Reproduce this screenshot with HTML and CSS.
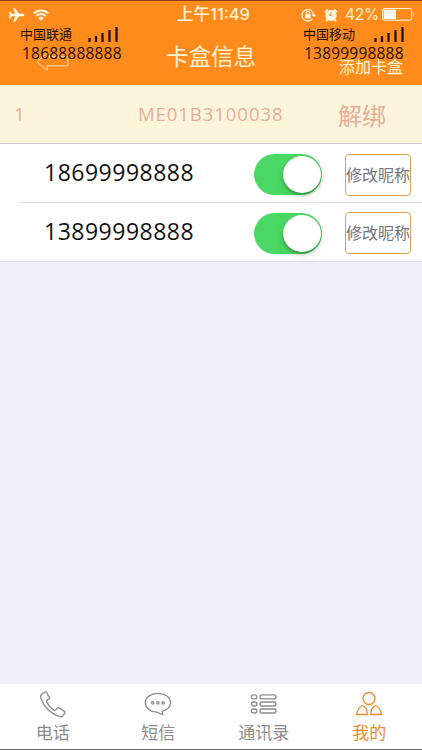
FILE: index.html
```html
<!DOCTYPE html>
<html lang="zh-CN">
<head>
  <meta charset="UTF-8">
  <meta name="viewport" content="width=device-width, initial-scale=1.0">
  <title>卡盒信息</title>
  <link rel="stylesheet" href="styles.css">
</head>
<body>

  <header>
    <div class="status-bar">
      <div class="status-left">
        <svg width="17" height="14" viewBox="0 0 17 14"><path d="M16.300 7c0 .8-.8 1.300-1.600 1.300h-3.600L7 13.800H5L7.200 8.300H4L2.200 10.200H.6L1.700 7 .6 3.800h1.600L4 5.700h3.200L5 .2h2l4.100 5.500h3.600c.8 0 1.600.5 1.600 1.300z" fill="#fff8e6"/></svg>
        <svg class="wifi" width="16" height="12" viewBox="0 0 16 12"><g fill="none" stroke="#fff8e6" stroke-width="2"><path d="M.8 4.400a10.200 10.200 0 0 1 14.400 0"/><path d="M3.300 7a6.600 6.600 0 0 1 9.400 0"/></g><path d="M8 11.800L5.200 9a4 4 0 0 1 5.600 0z" fill="#fff8e6"/></svg>
      </div>
      <div class="status-time">上午11:49</div>
      <div class="status-right">
        <svg width="16" height="14" viewBox="0 0 16 14"><path d="M11.400 10.900A5.800 5.800 0 1 1 12.600 7" fill="none" stroke="#fff8e6" stroke-width="1.2"/><path d="M10.600 6.500h4.600L12.900 9.200z" fill="#fff8e6"/><rect x="4" y="6.2" width="5.6" height="4.2" fill="#fff8e6"/><path d="M5.200 6.500V5a1.600 1.600 0 0 1 3.200 0v1.500" fill="none" stroke="#fff8e6" stroke-width="1.1"/></svg>
        <svg class="alarm" width="14" height="14" viewBox="0 0 14 14"><circle cx="7" cy="7.4" r="5.6" fill="#fff8e6"/><path d="M.9 4.100L3.900 1.400M13.100 4.100l-3-2.700M3.400 11.400l-1.300 1.800M10.600 11.400l1.300 1.800" stroke="#fff8e6" stroke-width="1.8"/><path d="M7 4v3.700L4.800 6.600" fill="none" stroke="#ff8b1c" stroke-width="1.1"/></svg>
        <span class="percent">42%</span>
        <svg class="battery" width="33" height="13" viewBox="0 0 33 13"><rect x=".6" y=".6" width="29" height="11.6" rx="1.5" fill="none" stroke="#fff8e6" stroke-width="1"/><rect x="1.6" y="1.6" width="12.4" height="9.6" fill="#fffaf0"/><path d="M31 4.200c1.700.6 1.700 3.600 0 4.200z" fill="#fff8e6"/></svg>
      </div>
    </div>
    <div class="nav-bar">
      <a class="back" href="#">
        <svg width="34" height="20" viewBox="0 0 34 20"><path d="M1 11L11.300 1.500v4.200H32v9.100H11.300v4.400z" fill="none" stroke="#ffdca5" stroke-width="1"/></svg>
      </a>
      <h1>卡盒信息</h1>
      <a class="add" href="#">添加卡盒</a>
    </div>

    <!-- the two SIM labels float over the navigation bar -->
    <div class="sim sim-one">
      <div class="carrier">中国联通
        <svg width="31" height="15" viewBox="0 0 31 15"><path d="M1.500 11v4M8 9v6M14.500 6v9M21.500 3v12M28.500 0v15" stroke="#1c0d05" stroke-width="2.2"/></svg>
      </div>
      <div class="sim-number">18688888888</div>
    </div>
    <div class="sim sim-two">
      <div class="carrier">中国移动
        <svg width="31" height="15" viewBox="0 0 31 15"><path d="M1.500 11v4M8 9v6M14.500 6v9M21.500 3v12M28.500 0v15" stroke="#1c0d05" stroke-width="2.2"/></svg>
      </div>
      <div class="sim-number">13899998888</div>
    </div>
  </header>

  <main>
    <div class="box-row">
      <span class="box-index">1</span>
      <span class="box-id">ME01B3100038</span>
      <a class="unbind" href="#">解绑</a>
    </div>
    <ul class="card-list">
      <li>
        <span class="phone">18699998888</span>
        <span class="switch"></span>
        <button type="button">修改昵称</button>
      </li>
      <li>
        <span class="phone">13899998888</span>
        <span class="switch"></span>
        <button type="button">修改昵称</button>
      </li>
    </ul>
  </main>

  <nav class="tab-bar">
    <a href="#">
      <svg width="28" height="28" viewBox="0 0 28 28"><path d="M3.300 2.900L6 1.100c.7-.4 1.300-.2 1.700.4l2.600 4.700c.4.7.2 1.300-.4 1.700L8 9.300c-.6.5-.6 1.100-.3 1.800 1.700 3.400 4.100 6 7.100 8 .7.5 1.400.4 1.900-.2l1.600-1.800c.5-.6 1.200-.6 1.800-.2l5.300 3.500c.7.5.8 1.100.4 1.800l-1.900 2.600c-.7.9-1.800 1.100-3 .8C12 23 4.400 15.600 1.700 6.200c-.4-1.400.2-2.500 1.600-3.300z"/></svg>
      <span>电话</span>
    </a>
    <a href="#">
      <svg width="28" height="28" viewBox="0 0 28 28"><path d="M18.200 20.300l.5 3.200-6-2.300C6 21 1.300 16.900 1.300 11.800 1.300 6.400 7 2.300 14 2.300s12.500 4.100 12.500 9.500c0 4-3.300 7.200-8.300 8.500z"/><circle cx="8.7" cy="11.8" r="1.2"/><circle cx="13.9" cy="11.8" r="1.2"/><circle cx="19.1" cy="11.8" r="1.2"/></svg>
      <span>短信</span>
    </a>
    <a href="#">
      <svg width="28" height="28" viewBox="0 0 28 28"><rect x="1.4" y="3.9" width="5.4" height="4" rx="2"/><rect x="10" y="3.9" width="16" height="4" rx="2"/><rect x="1.4" y="11" width="5.4" height="4" rx="2"/><rect x="10" y="11" width="16" height="4" rx="2"/><rect x="1.4" y="18" width="5.4" height="4" rx="2"/><rect x="10" y="18" width="16" height="4" rx="2"/></svg>
      <span>通讯录</span>
    </a>
    <a class="active" href="#">
      <svg width="28" height="28" viewBox="0 0 28 28"><circle cx="14" cy="7.5" r="6"/><path d="M7.500 14.500c-3 1-5 4.300-6 9h10.800c0-4-1.300-7.500-4.800-9zM20.500 14.500c3 1 5 4.300 6 9H15.700c0-4 1.300-7.500 4.800-9z"/></svg>
      <span>我的</span>
    </a>
  </nav>

</body>
</html>
```
FILE: styles.css
```css
* {
  box-sizing: border-box;
}
body {
  margin: 0;
  height: 750px;
  display: flex;
  flex-direction: column;
  overflow: hidden;
  background-color: #efeff5;
  font-family: "Open Sans", "Noto Sans CJK SC", sans-serif;
  white-space: nowrap;
}
a {
  color: inherit;
  text-decoration: none;
}
svg {
  display: block;
  flex: none;
}
header {
  position: relative;
  height: 85px;
  background-color: #ff8b1c;
  border-top: 1px solid #8c3f1e;
  color: #fff3d4;
}
.status-bar {
  display: grid;
  grid-template-columns: 1fr auto 1fr;
  align-items: center;
  height: 27px;
  padding: 0 7px 0 8px;
}
.status-left,
.status-right {
  display: flex;
  align-items: center;
}
.status-right {
  justify-content: flex-end;
}
.wifi {
  margin-left: 8px;
}
.status-time {
  margin-left: 4px;
  font-family: Inter, "Noto Sans CJK SC", sans-serif;
  font-size: 16.5px;
  font-weight: 500;
  line-height: 27px;
}
.alarm {
  margin-left: 7px;
}
.percent {
  margin-left: 7px;
  font-family: Inter, sans-serif;
  font-size: 15.5px;
  letter-spacing: -0.2px;
}
.battery {
  margin-left: 3px;
}
.nav-bar {
  display: grid;
  grid-template-columns: 1fr auto 1fr;
  align-items: center;
  height: 57px;
  padding: 0 19px;
}
.back {
  margin: 8px 0 0 17px;
}
h1 {
  margin: 0;
  font-size: 22.5px;
  font-weight: 400;
  line-height: 57px;
}
.add {
  justify-self: end;
  padding-top: 20px;
  font-size: 16px;
  line-height: 30px;
}
.sim {
  position: absolute;
  top: 24px;
  color: #1c0d05;
}
.sim-one {
  left: 20px;
}
.sim-two {
  left: 303px;
}
.carrier {
  display: flex;
  align-items: center;
  font-size: 13px;
  line-height: 19px;
}
.carrier svg {
  margin: -1px 0 0 16px;
}
.sim-two svg {
  margin-left: 19px;
}
.sim-number {
  padding-left: 2px;
  font-size: 15.5px;
  line-height: 18px;
  letter-spacing: 0.2px;
}
.sim-two .sim-number {
  padding-left: 1px;
}
.box-row {
  display: flex;
  align-items: center;
  height: 59px;
  padding-left: 14px;
  background-color: #fdf5db;
  border-bottom: 1px solid #cfcdc8;
  color: #e5ad99;
  font-size: 19px;
}
.box-index {
  width: 124px;
}
.box-id {
  width: 200px;
  padding-bottom: 2px;
  font-size: 18.5px;
  letter-spacing: 0.95px;
}
.unbind {
  font-size: 24px;
}
.card-list {
  margin: 0;
  padding: 0;
  list-style: none;
  background-color: #fff;
  border-bottom: 1px solid #dcdce0;
}
.card-list li {
  display: flex;
  align-items: center;
  height: 59px;
  margin-left: 20px;
  padding: 2px 11px 0 0;
}
.card-list li + li {
  height: 58px;
  box-shadow: 0 -1px 0 #dedee0;
}
.phone {
  width: 231px;
  padding: 0 0 5px 24px;
  color: #111;
  font-size: 23px;
  line-height: 30px;
  letter-spacing: 0.5px;
}
.switch {
  display: flex;
  justify-content: flex-end;
  width: 68px;
  height: 41px;
  margin-left: 3px;
  padding: 2px 1px;
  border-radius: 21px;
  background-color: #4bd763;
}
.switch::after {
  content: "";
  width: 38px;
  height: 37px;
  border-radius: 50%;
  background-color: #fff;
  box-shadow: 0 2px 3px rgba(0, 40, 0, 0.3), 0 4px 8px rgba(0, 0, 0, 0.1);
}
button {
  width: 66px;
  height: 42px;
  margin-left: auto;
  padding: 0 0 2px;
  border: 1.5px solid #dfa04e;
  border-radius: 4px;
  background-color: #fff;
  color: #77747c;
  font-family: "Noto Sans CJK SC", sans-serif;
  font-size: 16px;
}
.tab-bar {
  display: grid;
  grid-template-columns: repeat(4, 1fr);
  height: 66px;
  margin-top: auto;
  background-color: #fff;
  border-bottom: 1px solid #666;
  color: #8c8c8c;
}
.tab-bar a {
  display: flex;
  flex-direction: column;
  align-items: center;
  padding-top: 7px;
}
.tab-bar svg {
  fill: none;
  stroke: currentColor;
  stroke-width: 1.3;
}
.tab-bar span {
  font-family: "Noto Sans CJK SC", sans-serif;
  font-size: 17px;
  line-height: 26px;
}
.tab-bar .active {
  color: #ec8c2c;
}
```
